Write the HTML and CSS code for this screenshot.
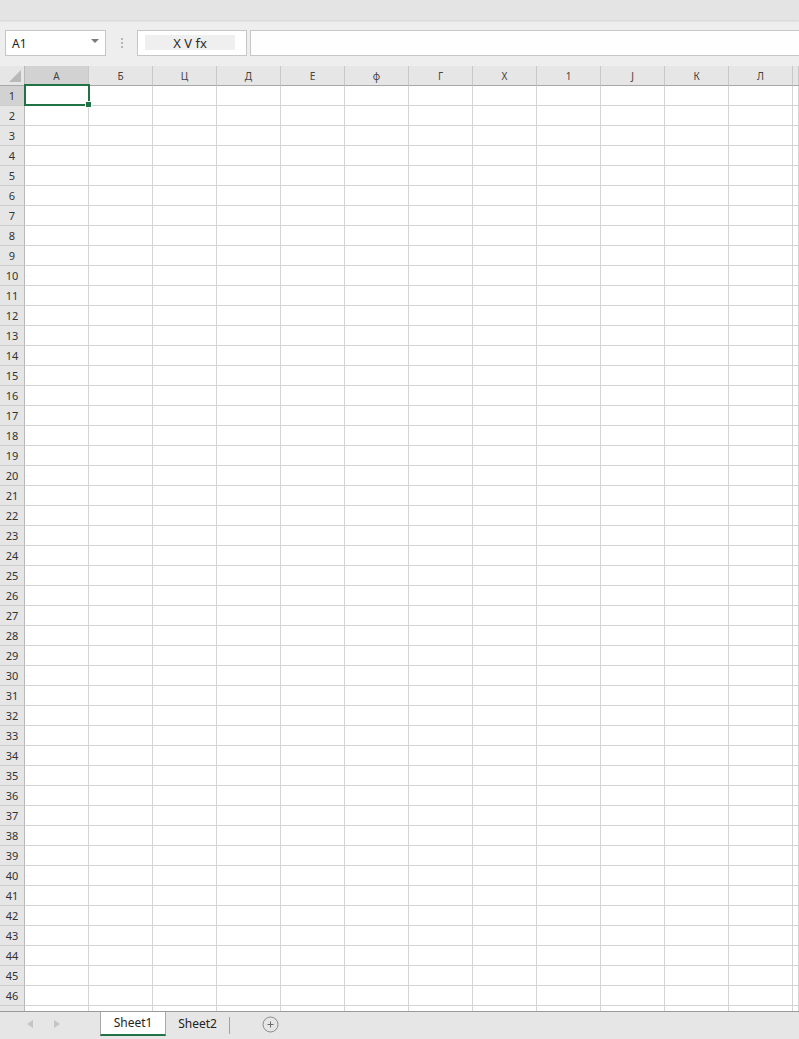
FILE: index.html
```html
<!DOCTYPE html>
<html lang="en">
<head>
  <meta charset="UTF-8" />
  <meta name="viewport" content="width=device-width, initial-scale=1.0"/>
  <title>Sheet</title>
  <link rel="stylesheet" href="styles.css">
</head>
<body>
  <div class="titlebar"></div>

  <div class="formula-bar">
    <div class="name-box">
      <span>A1</span>
      <svg class="caret" width="8" height="4" viewBox="0 0 8 4"><path d="M0 0h8L4 4z" fill="#7a7a7a"/></svg>
    </div>
    <div class="grip">
      <i></i><i></i><i></i>
    </div>
    <div class="fx-box">
      <span class="fx-buttons">X V fx</span>
    </div>
    <div class="fx-input"></div>
  </div>

  <div class="sheet" id="sheet">
    <div class="selection"><span class="handle"></span></div>
  </div>

  <div class="tabbar">
    <div class="tab-nav">
      <svg width="6" height="8" viewBox="0 0 6 8"><path d="M6 0v8L0 4z" fill="#c4c4c4"/></svg>
      <svg width="6" height="8" viewBox="0 0 6 8"><path d="M0 0v8l6-4z" fill="#c4c4c4"/></svg>
    </div>
    <div class="tab active">Sheet1</div>
    <div class="tab">Sheet2</div>
    <span class="tab-sep"></span>
    <div class="add-sheet">
      <svg width="17" height="17" viewBox="0 0 17 17">
        <circle cx="8.5" cy="8.5" r="7.5" fill="none" stroke="#8a8a8a" stroke-width="1"/>
        <path d="M8.5 5.5v6M5.5 8.5h6" stroke="#6a6a6a" stroke-width="1"/>
      </svg>
    </div>
  </div>

  <script>
    const columns = ["A", "Б", "Ц", "Д", "Е", "ф", "Г", "Х", "1", "J", "К", "Л", ""];
    const visibleRows = 46;
    const sheet = document.getElementById("sheet");

    let html = '<div class="corner"><span></span></div>';
    columns.forEach((c, i) => {
      html += `<div class="col-head${i === 0 ? " picked" : ""}">${c}</div>`;
    });

    // one extra row so the grid runs down to the tab bar
    for (let r = 1; r <= visibleRows + 1; r++) {
      const label = r <= visibleRows ? r : "";
      html += `<div class="row-head${r === 1 ? " picked" : ""}">${label}</div>`;
      columns.forEach(() => {
        html += '<div class="cell"></div>';
      });
    }

    sheet.insertAdjacentHTML("beforeend", html);
  </script>
</body>
</html>
```

FILE: styles.css
```css
body {
  margin: 0;
  font-family: "Noto Sans", "Open Sans", Arial, sans-serif;
  background-color: #e6e6e6;
  color: #333;
  overflow: hidden;
  height: 1039px;
}

.titlebar {
  height: 20px;
  background-color: #e4e4e4;
  box-shadow: 0 1px 2px rgba(0, 0, 0, 0.12);
  position: relative;
  z-index: 2;
}

.formula-bar {
  height: 46px;
  box-sizing: border-box;
  padding: 10px 0 0 5px;
  display: flex;
  align-items: flex-start;
  background-color: #eeeeee;
}

.name-box {
  width: 101px;
  height: 26px;
  box-sizing: border-box;
  border: 1px solid #c6c6c6;
  background-color: #fff;
  display: flex;
  align-items: center;
  justify-content: space-between;
  padding: 0 6px 0 6px;
  font-size: 12px;
  color: #222;
}

.name-box .caret {
  margin-top: -4px;
}

.grip {
  width: 31px;
  height: 26px;
  display: flex;
  flex-direction: column;
  align-items: center;
  justify-content: center;
  gap: 2px;
}

.grip i {
  width: 2px;
  height: 2px;
  background-color: #b4b4b4;
}

.fx-box {
  width: 110px;
  height: 26px;
  box-sizing: border-box;
  border: 1px solid #c6c6c6;
  background-color: #fff;
  padding: 4px 0 0 7px;
}

.fx-buttons {
  display: block;
  width: 90px;
  height: 15px;
  line-height: 17px;
  background-color: #efefef;
  text-align: center;
  font-size: 13px;
  color: #2a2a2a;
}

.fx-input {
  flex: 1;
  height: 26px;
  margin-left: 3px;
  box-sizing: border-box;
  border: 1px solid #c6c6c6;
  border-right: none;
  background-color: #fefefe;
}

.sheet {
  position: relative;
  height: 945px;
  overflow: hidden;
  display: grid;
  grid-template-columns: 25px repeat(12, 64px) 1fr;
  grid-auto-rows: 20px;
  background-color: #fff;
}

.sheet > div {
  box-sizing: border-box;
}

.corner {
  background-color: #e6e6e6;
  border-right: 1px solid #b9b9b9;
  border-bottom: 1px solid #a8a8a8;
  position: relative;
}

.corner span {
  position: absolute;
  right: 3px;
  bottom: 3px;
  width: 0;
  height: 0;
  border-left: 12px solid transparent;
  border-bottom: 12px solid #b9b9b9;
}

.col-head {
  background-color: #e6e6e6;
  border-right: 1px solid #c8c8c8;
  border-bottom: 1px solid #a8a8a8;
  font-size: 10px;
  color: #444;
  text-align: center;
  line-height: 20px;
}

.row-head {
  background-color: #e6e6e6;
  border-right: 1px solid #b9b9b9;
  border-bottom: 1px solid #cdcdcd;
  font-size: 11px;
  color: #333;
  text-align: center;
  line-height: 19px;
}

.col-head.picked,
.row-head.picked {
  background-color: #d2d2d2;
}

.cell {
  border-right: 1px solid #d4d4d4;
  border-bottom: 1px solid #d4d4d4;
}

.selection {
  position: absolute;
  top: 18px;
  left: 24px;
  width: 66px;
  height: 22px;
  box-sizing: border-box;
  border: 2px solid #217346;
  z-index: 1;
}

.handle {
  position: absolute;
  right: -4px;
  bottom: -4px;
  width: 5px;
  height: 5px;
  background-color: #217346;
  border: 1px solid #fff;
}

.tabbar {
  height: 28px;
  box-sizing: border-box;
  border-top: 1px solid #9a9a9a;
  display: flex;
  align-items: flex-start;
  background-color: #e6e6e6;
}

.tab-nav {
  width: 100px;
  height: 24px;
  display: flex;
  align-items: center;
  gap: 21px;
  padding-left: 27px;
  box-sizing: border-box;
}

.tab {
  width: 63px;
  height: 24px;
  box-sizing: border-box;
  text-align: center;
  line-height: 24px;
  font-size: 12px;
  color: #222;
}

.tab.active {
  width: 66px;
  background-color: #fff;
  border-left: 1px solid #a8a8a8;
  border-right: 1px solid #a8a8a8;
  border-bottom: 2px solid #217346;
  line-height: 22px;
}

.tab-sep {
  width: 1px;
  height: 17px;
  margin-top: 5px;
  background-color: #a0a0a0;
}

.add-sheet {
  margin: 4px 0 0 32px;
  height: 17px;
}
```
